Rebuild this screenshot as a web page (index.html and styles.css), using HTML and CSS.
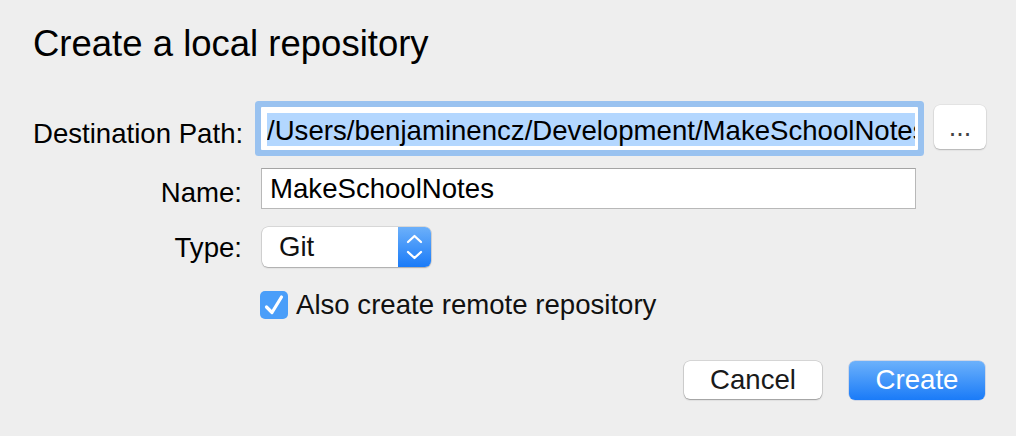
FILE: index.html
```html
<!DOCTYPE html>
<html>
<head>
<meta charset="utf-8">
<link rel="stylesheet" href="styles.css">
</head>
<body>
<div class="dialog">
  <h1 class="title">Create a local repository</h1>
  <div class="form">
    <div class="label label-path">Destination Path:</div>
    <div class="path-row">
      <div class="field field-focus"><span class="selection">/Users/benjaminencz/Development/MakeSchoolNotes</span></div>
      <div class="browse">...</div>
    </div>

    <div class="label label-name">Name:</div>
    <div class="field field-plain">MakeSchoolNotes</div>

    <div class="label label-type">Type:</div>
    <div class="popup">
      <span class="popup-text">Git</span>
      <span class="stepper">
        <svg width="33" height="40" viewBox="0 0 33 40">
          <path d="M10 15 L16.5 9 L23 15" fill="none" stroke="#fff" stroke-width="2.3" stroke-linecap="round" stroke-linejoin="round"/>
          <path d="M10 25 L16.5 31 L23 25" fill="none" stroke="#fff" stroke-width="2.3" stroke-linecap="round" stroke-linejoin="round"/>
        </svg>
      </span>
    </div>

    <div class="spacer"></div>
    <div class="check-row">
      <span class="checkbox">
        <svg width="28" height="28" viewBox="0 0 28 28">
          <path d="M6.5 16 L12 21.5 L21.5 6" fill="none" stroke="#fff" stroke-width="3.2" stroke-linecap="round" stroke-linejoin="round"/>
        </svg>
      </span>
      <span class="check-label">Also create remote repository</span>
    </div>
  </div>
  <div class="actions">
    <div class="btn btn-cancel">Cancel</div>
    <div class="btn btn-create">Create</div>
  </div>
</div>
</body>
</html>
```

FILE: styles.css
```css
* { box-sizing: border-box; }
html, body {
  margin: 0;
  padding: 0;
  background: #eeeeee;
}
body {
  font-family: "Liberation Sans", Arial, sans-serif;
  color: #111;
  width: 1016px;
  height: 436px;
  overflow: hidden;
}
.dialog {
  padding: 24px 30px 0 33px;
}
.title {
  margin: 0 0 41px 0;
  font-size: 36.5px;
  font-weight: normal;
  line-height: 40px;
  height: 40px;
  color: #000;
}
.form {
  display: grid;
  grid-template-columns: 209px 1fr;
  column-gap: 19px;
  row-gap: 18px;
}
.label {
  font-size: 27.6px;
  line-height: 30px;
  text-align: right;
  white-space: nowrap;
  align-self: start;
  color: #000;
}
.label-path { margin-top: 14px; }
.label-name { margin-top: 10px; }
.label-type { margin-top: 6px; }

.path-row {
  display: flex;
  align-items: flex-start;
  height: 45px;
}
.field {
  background: #fff;
  font-size: 27.6px;
  white-space: nowrap;
  overflow: hidden;
  color: #000;
}
.field-focus {
  flex: 0 0 657px;
  margin-top: 2px;
  height: 43px;
  padding: 6px 3px 4px 6px;
  border-radius: 1px;
  box-shadow: 0 0 0 6px #99c2f0;
}
.selection {
  display: block;
  height: 33px;
  padding-top: 2px;
  line-height: 31px;
  background: #b3d7ff;
  overflow: hidden;
  white-space: nowrap;
}
.browse {
  margin-left: 16px;
  width: 52px;
  height: 44px;
  background: #fff;
  border-radius: 6px;
  box-shadow: 0 0 0 0.5px rgba(0,0,0,0.08), 0 1px 1.5px rgba(0,0,0,0.22);
  font-size: 27px;
  line-height: 44px;
  text-align: center;
  color: #444;
}
.field-plain {
  width: 655px;
  height: 41px;
  border: 1px solid #b8b8b8;
  border-top-color: #a4a4a4;
  padding-left: 8px;
  line-height: 39px;
}
.popup {
  display: flex;
  width: 169px;
  height: 40px;
  margin-left: 1px;
  background: #fff;
  border-radius: 6px;
  box-shadow: 0 0 0 0.5px rgba(0,0,0,0.18), 0 1px 1.5px rgba(0,0,0,0.22);
  overflow: hidden;
}
.popup-text {
  flex: 1;
  font-size: 27.6px;
  line-height: 40px;
  padding-left: 17px;
  color: #111;
}
.stepper {
  flex: 0 0 33px;
  background: linear-gradient(#6cb0fa, #1a7bf8);
  display: flex;
}
.spacer { }
.check-row {
  display: flex;
  align-items: center;
  gap: 8px;
  margin-top: 6px;
  margin-left: -1px;
  height: 28px;
}
.checkbox {
  width: 28px;
  height: 28px;
  border-radius: 5px;
  background: #4a9ef9;
  display: flex;
}
.check-label {
  font-size: 27.6px;
  line-height: 30px;
  color: #111;
  white-space: nowrap;
}
.actions {
  display: flex;
  justify-content: flex-end;
  gap: 27px;
  margin-top: 42px;
  padding-right: 1px;
}
.btn {
  height: 38px;
  border-radius: 6px;
  font-size: 27.6px;
  line-height: 38px;
  text-align: center;
}
.btn-cancel {
  width: 138px;
  background: #fff;
  color: #1a1a1a;
  box-shadow: 0 0 0 0.5px rgba(0,0,0,0.2), 0 1px 1.5px rgba(0,0,0,0.28);
}
.btn-create {
  width: 136px;
  height: 39px;
  background: linear-gradient(#6cb1fb, #1a7bf8);
  color: #fff;
  box-shadow: 0 0 0 0.5px rgba(0,60,180,0.25);
}
```
